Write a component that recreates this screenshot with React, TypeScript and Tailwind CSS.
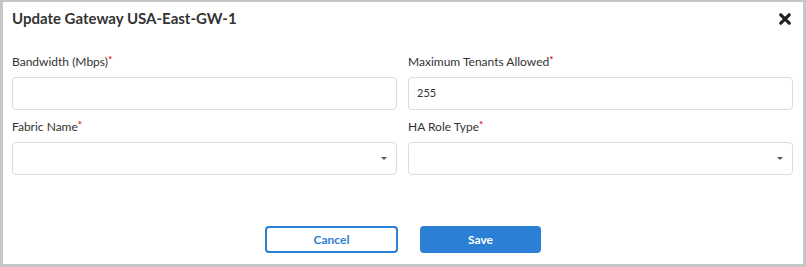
function Label({ text }: { text: string }) {
  return (
    <div className="h-4 text-[12px] leading-4 text-[#333]">
      {text}
      <span className="relative -top-[3px] text-[10px] font-bold text-[#e01a24]">*</span>
    </div>
  )
}

function TextField({ label, value }: { label: string; value?: string }) {
  return (
    <div className="flex flex-col gap-[7px]">
      <Label text={label} />
      <div className="flex h-[33px] items-center rounded-[4px] border border-[#dcdcdc] bg-white px-[8px] text-[11px] text-[#333]">
        {value}
      </div>
    </div>
  )
}

function SelectField({ label }: { label: string }) {
  return (
    <div className="flex flex-col gap-[7px]">
      <Label text={label} />
      <div className="flex h-[33px] items-center justify-end rounded-[4px] border border-[#dcdcdc] bg-white pr-[9px]">
        <span className="h-0 w-0 border-x-[3px] border-t-[3px] border-x-transparent border-t-[#555]" />
      </div>
    </div>
  )
}

export default function App() {
  return (
    <div
      className="flex h-[267px] w-[806px] flex-col border-b-[3px] border-l-[3px] border-r-[3px] border-t-2 border-[#c6c6c6] bg-white pl-[9px] pr-[10px]"
      style={{ fontFamily: "Lato, 'Open Sans', sans-serif" }}
    >
      <div className="flex h-[30px] items-center justify-between pt-[1px]">
        <h2 className="text-[15px] font-bold leading-5 text-[#333]">Update Gateway USA-East-GW-1</h2>
        {/* close icon */}
        <svg width="12" height="12" viewBox="0 0 12 12" className="mr-[2px] mt-[2px]">
          <path d="M1.8 1.8 L10.2 10.2 M10.2 1.8 L1.8 10.2" stroke="#222" strokeWidth="3.2" strokeLinecap="round" />
        </svg>
      </div>

      <div className="mt-[22px] grid grid-cols-2 gap-x-[11px] gap-y-[9px]">
        <TextField label="Bandwidth (Mbps)" />
        <TextField label="Maximum Tenants Allowed" value="255" />
        <SelectField label="Fabric Name" />
        <SelectField label="HA Role Type" />
      </div>

      <div className="mt-[51px] flex justify-center gap-[22px] pl-[1px]">
        <button className="h-[27px] w-[133px] rounded-[4px] border-2 border-[#2b7fd5] bg-white text-[12px] font-bold text-[#2b7fd5]">
          Cancel
        </button>
        <button className="h-[27px] w-[121px] rounded-[4px] bg-[#2b7fd5] text-[12px] font-bold text-white">
          Save
        </button>
      </div>
    </div>
  )
}
